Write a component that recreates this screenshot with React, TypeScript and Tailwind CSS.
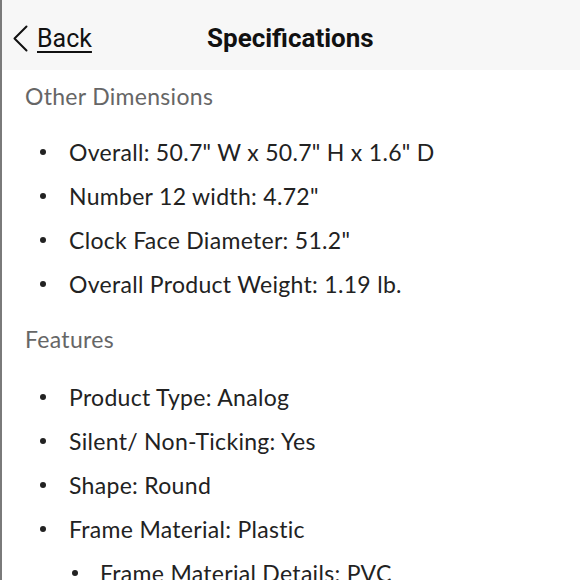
import React from "react";

const dims = [
  'Overall: 50.7" W x 50.7" H x 1.6" D',
  'Number 12 width: 4.72"',
  'Clock Face Diameter: 51.2"',
  "Overall Product Weight: 1.19 lb.",
];

const feats = [
  "Product Type: Analog",
  "Silent/ Non-Ticking: Yes",
  "Shape: Round",
  "Frame Material: Plastic",
];

function Item({ text, sub = false }: { text: string; sub?: boolean }) {
  return (
    <li className={`flex items-center h-[44px] ${sub ? "pl-[70px]" : "pl-[38px]"}`}>
      <span className="w-[6px] h-[6px] rounded-full bg-[#222] shrink-0" />
      <span className={`${sub ? "ml-[22px]" : "ml-[23px]"} text-[23px] tracking-[0.3px] text-[#222] whitespace-nowrap`}>{text}</span>
    </li>
  );
}

export default function App() {
  return (
    <div className="w-[580px] h-[580px] overflow-hidden bg-white border-l-2 border-[#7a7a7a] relative" style={{ fontFamily: "Lato, 'Noto Sans', sans-serif" }}>
      <header className="h-[70px] pt-[7px] bg-[#f7f7f7] flex items-center relative" style={{ fontFamily: "Roboto, Inter, sans-serif" }}>
        <div className="flex items-center pl-[10px] gap-[9px]">
          <svg width="16" height="27" viewBox="0 0 16 27" fill="none">
            <path d="M14.5 1.5 L2.5 13.5 L14.5 25.5" stroke="#111" strokeWidth="2" strokeLinecap="round" strokeLinejoin="round" />
          </svg>
          <span className="text-[25px] text-[#111] underline underline-offset-[4px] decoration-[1.5px]">Back</span>
        </div>
        <h1 className="absolute left-[205px] top-[3px] h-[70px] flex items-center text-[26px] font-bold text-[#111]">Specifications</h1>
      </header>
      <section className="pl-[23px]">
        <h2 className="text-[23px] tracking-[0.3px] text-[#666] h-[52px] flex items-center">Other Dimensions</h2>
      </section>
      <ul className="mt-[8px]">
        {dims.map((d) => (
          <Item key={d} text={d} />
        ))}
      </ul>
      <section className="pl-[23px] mt-[6px]">
        <h2 className="text-[23px] tracking-[0.3px] text-[#666] h-[54px] flex items-center">Features</h2>
      </section>
      <ul className="mt-[9px]">
        {feats.map((d) => (
          <Item key={d} text={d} />
        ))}
        <Item text="Frame Material Details: PVC" sub />
      </ul>
    </div>
  );
}
